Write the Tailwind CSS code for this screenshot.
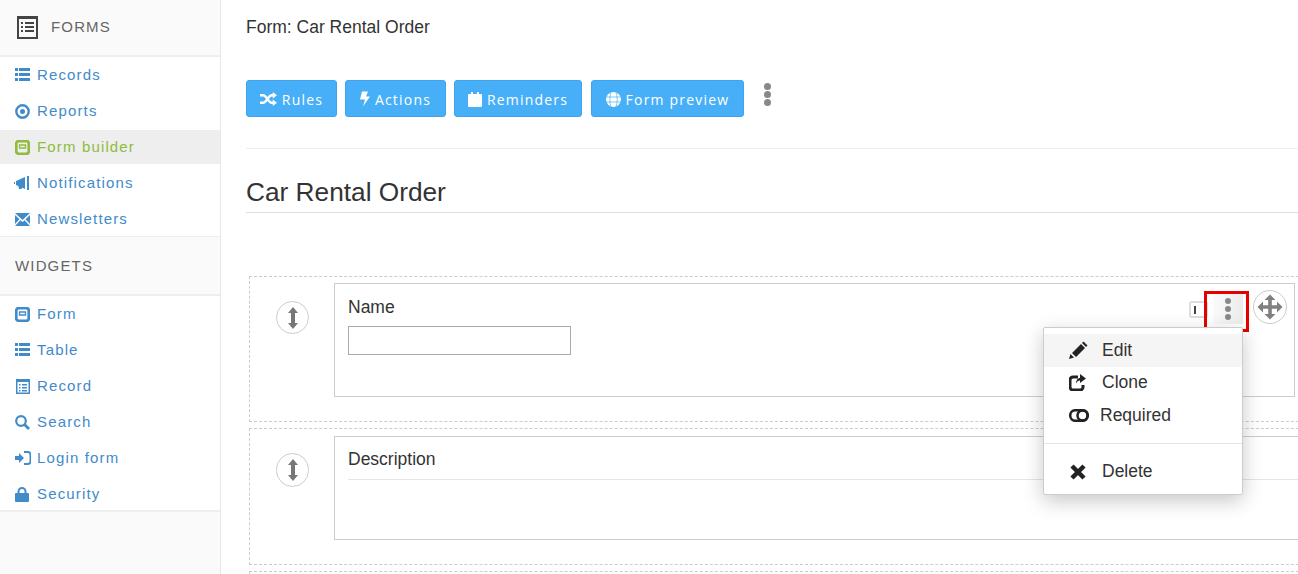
<!DOCTYPE html>
<html lang="en">
<head>
    <meta charset="UTF-8">
    <title>Form: Car Rental Order</title>
    <script src="https://cdn.jsdelivr.net/npm/@tailwindcss/browser@4"></script>
</head>
<body class="h-[574px] w-[1298px] overflow-hidden bg-white font-['Liberation_Sans',sans-serif] text-[#333]">
<div class="flex h-full">
    <!-- Sidebar -->
    <aside class="w-[221px] shrink-0 bg-[#fafafa] border-r border-[#e7e7e7] text-[15px] tracking-[1.15px] text-[#428bca]">
        <div class="flex items-center h-[57px] pl-[17px] gap-[12px] text-[#666] border-b-2 border-[#eee]">
            <svg class="w-[21px] h-[23px]" viewBox="0 0 21 23"><rect width="21" height="23" fill="#444"/><rect x="2" y="3" width="17" height="18" fill="#fafafa"/><path d="M4 6h2v2H4zM8 6h9v2H8zM4 10h2v2H4zM8 10h9v2H8zM4 14h2v2H4zM8 14h9v2H8z" fill="#444"/></svg>
            <span class="ml-[1px]">FORMS</span>
        </div>
        <ul class="h-[180px] bg-white border-b border-[#eee]">
            <li class="flex items-center h-[36px] pl-[15px] gap-[7px]">
                <svg class="w-[15px] h-[14px]" viewBox="0 0 15 14" fill="currentColor"><path d="M0 0h3v3H0zM4 0h11v3H4zM0 5h3v3H0zM4 5h11v3H4zM0 10h3v3H0zM4 10h11v3H4z"/></svg>Records</li>
            <li class="flex items-center h-[36px] pl-[15px] gap-[7px]">
                <svg class="w-[15px] h-[15px]" viewBox="0 0 15 15"><circle cx="7.500" cy="7.500" r="6.200" fill="none" stroke="currentColor" stroke-width="2.400"/><circle cx="7.500" cy="7.500" r="2.500" fill="currentColor"/></svg>Reports</li>
            <li class="flex items-center h-[34px] my-px pl-[15px] gap-[7px] bg-[#eee] text-[#8fbc3f]">
                <svg class="w-[15px] h-[15px]" viewBox="0 0 15 15"><rect x="1.200" y="1.200" width="12.600" height="12.600" rx="2.500" fill="none" stroke="currentColor" stroke-width="2.800"/><path d="M4.500 5h6v3h-6z" fill="none" stroke="currentColor" stroke-width="1.300"/></svg>Form builder</li>
            <li class="flex items-center h-[36px] pl-[14px] gap-[7px]">
                <svg class="w-[16px] h-[14px]" viewBox="0 0 16 14" fill="currentColor"><path d="M0 6h1v2H0zM2 5l9-4v12L2 9zM4 9h3l1 4H5zM13 0h2v14h-2z"/></svg>Notifications</li>
            <li class="flex items-center h-[36px] pl-[15px] gap-[7px]">
                <svg class="w-[15px] h-[13px]" viewBox="0 0 15 12" preserveAspectRatio="none" fill="currentColor"><path d="M0 0h15L7.500 6.500zM0 1.800l4.500 4L0 10.200zM15 1.800l-4.500 4 4.500 4.400zM5.400 6.600l2.100 1.800 2.100-1.800L15 12H0z"/></svg>Newsletters</li>
        </ul>
        <div class="flex items-center h-[59px] pt-[2px] pl-[15px] text-[#666] border-b-2 border-[#eee]">WIDGETS</div>
        <ul class="h-[216px] bg-white border-b-2 border-[#eee]">
            <li class="flex items-center h-[36px] pl-[15px] gap-[7px]">
                <svg class="w-[15px] h-[15px]" viewBox="0 0 15 15"><rect x="1.200" y="1.200" width="12.600" height="12.600" rx="2.500" fill="none" stroke="currentColor" stroke-width="2.800"/><path d="M4.500 5h6v3h-6z" fill="none" stroke="currentColor" stroke-width="1.300"/></svg>Form</li>
            <li class="flex items-center h-[36px] pl-[15px] gap-[7px]">
                <svg class="w-[15px] h-[14px]" viewBox="0 0 15 14" fill="currentColor"><path d="M0 0h3v3H0zM4 0h11v3H4zM0 5h3v3H0zM4 5h11v3H4zM0 10h3v3H0zM4 10h11v3H4z"/></svg>Table</li>
            <li class="flex items-center h-[36px] pl-[16px] gap-[7px]">
                <svg class="w-[14px] h-[15px]" viewBox="0 0 14 15"><rect width="14" height="15" fill="currentColor"/><rect x="1.500" y="3" width="11" height="10.500" fill="#fff"/><path d="M3 5h1.500v1.500H3zM6 5h5v1.500H6zM3 8h1.500v1.500H3zM6 8h5v1.500H6zM3 11h1.500v1.500H3zM6 11h5v1.500H6z" fill="currentColor"/></svg>Record</li>
            <li class="flex items-center h-[36px] pl-[15px] gap-[7px]">
                <svg class="w-[15px] h-[15px]" viewBox="0 0 15 15" fill="none" stroke="currentColor"><circle cx="6" cy="6" r="4.800" stroke-width="2.200"/><path d="M9.500 9.500l4.500 4.500" stroke-width="2.800"/></svg>Search</li>
            <li class="flex items-center h-[36px] pl-[15px] gap-[6px]">
                <svg class="w-[16px] h-[14px]" viewBox="0 0 16 14" fill="currentColor"><path d="M0 5h4V2l5 5-5 5V9H0z"/><path d="M9 1h4a2.500 2.500 0 0 1 2.500 2.500v7A2.500 2.500 0 0 1 13 13H9" fill="none" stroke="currentColor" stroke-width="2"/></svg>Login form</li>
            <li class="flex items-center h-[36px] pl-[15px] gap-[8px]">
                <svg class="w-[14px] h-[15px]" viewBox="0 0 14 15" fill="currentColor"><path d="M1 6h12a1 1 0 0 1 1 1v7a1 1 0 0 1-1 1H1a1 1 0 0 1-1-1V7a1 1 0 0 1 1-1z"/><path d="M3.500 7V4.500a3.500 3.500 0 0 1 7 0V7" fill="none" stroke="currentColor" stroke-width="2"/></svg>Security</li>
        </ul>
    </aside>

    <!-- Main -->
    <main class="flex-1 min-w-0 pl-[25px] overflow-hidden">
        <h1 class="h-[80px] pt-[17px] text-[17.500px] leading-[20px] text-[#333]">Form: Car Rental Order</h1>
        <div class="flex items-start h-[69px] border-b border-[#eee] font-['Open_Sans',sans-serif] text-[14px] tracking-[1.200px] text-white">
            <button class="flex items-center justify-center gap-[5px] w-[91px] h-[37px] pt-[1px] rounded-[3px] bg-[#47aff7] border border-[#3da5ee]">
                <svg class="w-[17px] h-[14px]" viewBox="0 0 16 13" fill="none" stroke="#fff" stroke-width="2.400"><path d="M0 3h3c3 0 5 7 8 7h2M0 10h3c3 0 5-7 8-7h2"/><path d="M12 0l4 3-4 3zM12 7l4 3-4 3z" fill="#fff" stroke="none"/></svg>Rules</button>
            <button class="flex items-center justify-center gap-[5px] w-[101px] h-[37px] pt-[1px] ml-[8px] rounded-[3px] bg-[#47aff7] border border-[#3da5ee]">
                <svg class="w-[10px] h-[16px]" viewBox="0 0 10 15" fill="#fff"><path d="M2 0h6L6 5h4L3 15l2-7H0z"/></svg>Actions</button>
            <button class="flex items-center justify-center gap-[5px] w-[128px] h-[37px] pt-[1px] ml-[8px] rounded-[3px] bg-[#47aff7] border border-[#3da5ee]">
                <svg class="w-[14px] h-[15px]" viewBox="0 0 14 15" fill="#fff"><path d="M1 2h2V0h2v2h4V0h2v2h2a1 1 0 0 1 1 1v11a1 1 0 0 1-1 1H1a1 1 0 0 1-1-1V3a1 1 0 0 1 1-1z"/></svg>Reminders</button>
            <button class="flex items-center justify-center gap-[5px] w-[153px] h-[37px] pt-[1px] ml-[9px] rounded-[3px] bg-[#47aff7] border border-[#3da5ee]">
                <svg class="w-[15px] h-[15px]" viewBox="0 0 15 15"><circle cx="7.500" cy="7.500" r="7.500" fill="#fff"/><path d="M0 5h15M0 10h15M5 0c-1.600 4-1.600 11 0 15M10 0c1.600 4 1.600 11 0 15" fill="none" stroke="#47aff7" stroke-width=".7"/></svg>Form preview</button>
            <div class="flex flex-col gap-[1.600px] ml-[20px] mt-[3px]">
                <span class="size-[6.500px] rounded-full bg-[#888]"></span><span class="size-[6.500px] rounded-full bg-[#888]"></span><span class="size-[6.500px] rounded-full bg-[#888]"></span>
            </div>
        </div>
        <h2 class="h-[64px] pt-[28px] text-[26.250px] leading-[30px] text-[#333] border-b border-[#ddd]">Car Rental Order</h2>

        <!-- Field: Name -->
        <section class="relative flex w-[1100px] h-[146px] mt-[63px] ml-[3px] border border-dashed border-[#ccc] pt-[6px] pl-[26px]">
            <div class="flex shrink-0 items-center justify-center size-[33px] mt-[18px] rounded-full border border-[#ccc]">
                <svg class="w-[10px] h-[22px]" viewBox="0 0 10 22" fill="#777"><path d="M5 0l5 6H7v10h3l-5 6-5-6h3V6H0z"/></svg>
            </div>
            <div class="relative shrink-0 ml-[25px] w-[961px] h-[114px] border border-[#ccc] pl-[13px] pt-[13px]">
                <div class="text-[17.500px] leading-[20px]">Name</div>
                <div class="w-[223px] h-[29px] mt-[9px] border border-[#aaa]"></div>
                <div class="absolute left-[854px] top-[17px] flex items-center w-[19px] h-[17px] rounded-[3px] border-2 border-[#ddd] pl-[3px]"><span class="w-[1.500px] h-[8px] bg-[#444]"></span></div>
                <div class="absolute left-[878px] top-[10px] flex flex-col items-center justify-center gap-[1.600px] w-[30px] h-[30px] bg-linear-to-r from-[#fafafa] to-[#ececec]">
                    <span class="size-[6.500px] rounded-full bg-[#888]"></span><span class="size-[6.500px] rounded-full bg-[#888]"></span><span class="size-[6.500px] rounded-full bg-[#888]"></span>
                </div>
                <div class="absolute left-[869px] top-[7px] w-[45px] h-[41px] border-[3px] border-[#e60000]"></div>
                <div class="absolute left-[918px] top-[6px] flex items-center justify-center size-[34px] rounded-full border border-[#ccc] bg-white">
                    <svg class="w-[26px] h-[26px]" viewBox="0 0 26 26" fill="#808080"><path d="M13 .5l5.500 5.500h-3.700v5.200H20V7.500l5.500 5.500-5.500 5.500v-3.700h-5.200V20h3.700L13 25.500 7.500 20h3.700v-5.200H6v3.700L.5 13 6 7.500v3.700h5.200V6H7.500z"/></svg>
                </div>
            </div>
        </section>

        <!-- Field: Description -->
        <section class="flex w-[1100px] h-[137px] mt-[6px] ml-[3px] border border-dashed border-[#ccc] pt-[7px] pl-[26px]">
            <div class="flex shrink-0 items-center justify-center w-[33px] h-[34px] mt-[17px] rounded-full border border-[#ccc]">
                <svg class="w-[10px] h-[22px]" viewBox="0 0 10 22" fill="#777"><path d="M5 0l5 6H7v10h3l-5 6-5-6h3V6H0z"/></svg>
            </div>
            <div class="shrink-0 ml-[25px] w-[1000px] h-[104px] border border-[#ccc] pt-[12px]">
                <div class="ml-[13px] h-[31px] text-[17.500px] leading-[20px] border-b border-[#e5e5e5]">Description</div>
            </div>
        </section>
        <div class="w-[1100px] h-[20px] mt-[6px] ml-[3px] border border-dashed border-[#ccc]"></div>
    </main>
</div>

<!-- Dropdown menu -->
<div class="absolute left-[1043px] top-[327px] w-[200px] h-[168px] bg-white border border-[#ccc] rounded-[2px] shadow-[0_6px_20px_rgba(0,0,0,0.22)] pt-[6px] text-[17.500px] text-[#333]">
    <div class="flex items-center h-[33px] bg-[#f5f5f5] pl-[25px] gap-[14px]">
        <svg class="w-[19px] h-[18px] -mt-[2px]" viewBox="0 0 19 18" fill="#222"><path d="M0 18l1.500-5 3.500 3.500zM3 12l9-9 4 4-9 9zM13 2l1.500-1.500 4 4L17 6z"/></svg>Edit</div>
    <div class="flex items-center h-[31px] pl-[25px] gap-[15px]">
        <svg class="w-[18px] h-[17px]" viewBox="0 0 18 17"><path d="M9 3H4a3 3 0 0 0-3 3v7a3 3 0 0 0 3 3h7a3 3 0 0 0 3-3v-2" fill="none" stroke="#222" stroke-width="3"/><path d="M11 0l6 4.500-6 4.500V6.500c-2 0-3 1-4 3 0-3 1.500-5.500 4-5.500z" fill="#222"/></svg>Clone</div>
    <div class="flex items-center h-[34px] pl-[25px] gap-[11px]">
        <svg class="w-[20px] h-[13px]" viewBox="0 0 20 13" fill="none" stroke="#222" stroke-width="2.500"><rect x="1.200" y="1.200" width="17.600" height="10.600" rx="5.300"/><circle cx="13.500" cy="6.500" r="5"/></svg>Required</div>
    <div class="h-px bg-[#e5e5e5] mt-[11px] mb-[11px]"></div>
    <div class="flex items-center h-[33px] pl-[26px] gap-[16px]">
        <svg class="w-[16px] h-[16px]" viewBox="0 0 16 16" fill="none" stroke="#222" stroke-width="4.500"><path d="M2 2l12 12M14 2L2 14"/></svg>Delete</div>
</div>
</body>
</html>
